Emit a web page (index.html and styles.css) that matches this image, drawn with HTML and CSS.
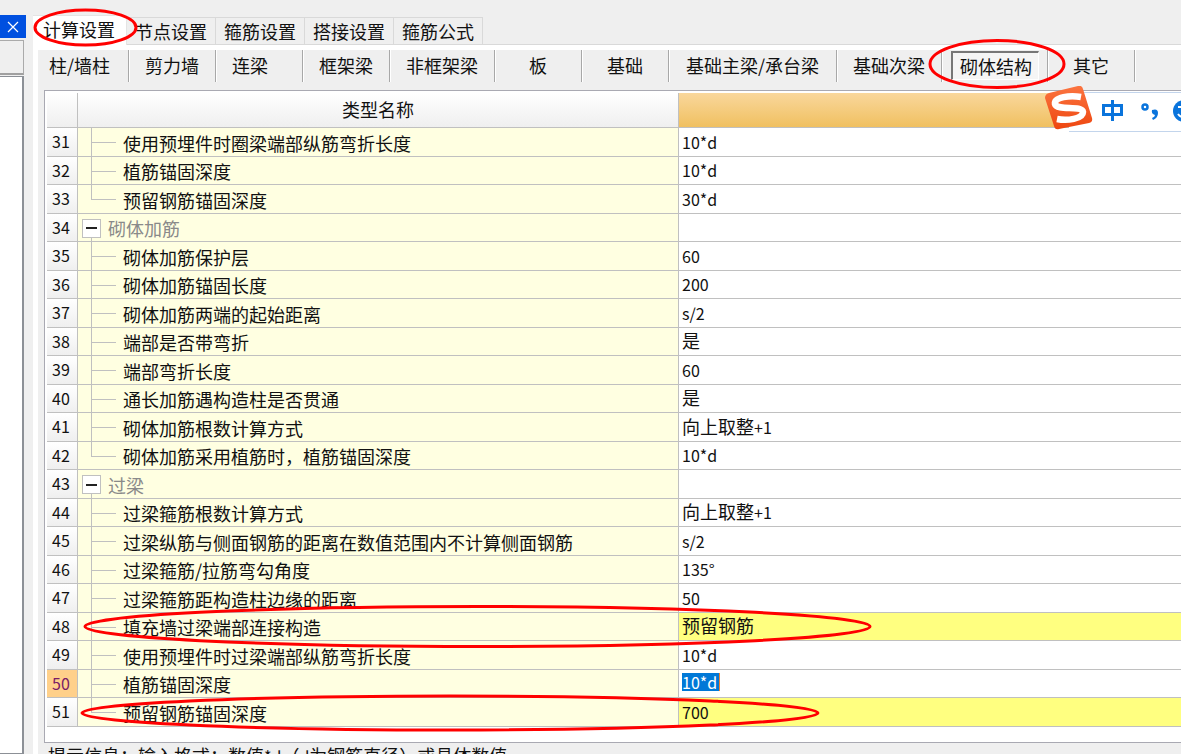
FILE: index.html
```html
<!DOCTYPE html>
<html lang="zh-CN">
<head>
<meta charset="utf-8">
<title>计算设置</title>
<link rel="stylesheet" href="styles.css">
</head>
<body>
<div class="app">
  <aside class="dock">
    <button class="dock-close" type="button" aria-label="关闭">
      <svg width="12" height="12" viewBox="0 0 12 12"><path d="M1 1L11 11M11 1L1 11" stroke="#fff" stroke-width="1.2" fill="none"/></svg>
    </button>
    <div class="dock-head"></div>
    <div class="dock-body"></div>
  </aside>
  <main class="panel">
    <nav class="tabs">
      <button type="button" class="tab active">计算设置</button>
      <button type="button" class="tab">节点设置</button>
      <button type="button" class="tab">箍筋设置</button>
      <button type="button" class="tab">搭接设置</button>
      <button type="button" class="tab">箍筋公式</button>
    </nav>
    <section class="page">
      <nav class="kinds">
        <button type="button" class="kind first">柱/墙柱</button>
        <button type="button" class="kind">剪力墙</button>
        <button type="button" class="kind start">连梁</button>
        <button type="button" class="kind">框架梁</button>
        <button type="button" class="kind">非框架梁</button>
        <button type="button" class="kind">板</button>
        <button type="button" class="kind">基础</button>
        <button type="button" class="kind wide">基础主梁/承台梁</button>
        <button type="button" class="kind">基础次梁</button>
        <button type="button" class="kind pressed"><span class="inset">砌体结构</span></button>
        <button type="button" class="kind">其它</button>
      </nav>
      <div class="frame">
        <table class="grid">
          <colgroup><col class="c-num"><col class="c-name"><col></colgroup>
          <thead><tr><th></th><th>类型名称</th><th class="hot"></th></tr></thead>
          <tbody>
            <tr><th>31</th><td class="leaf">使用预埋件时圈梁端部纵筋弯折长度</td><td><span class="n">10*d</span></td></tr>
            <tr><th>32</th><td class="leaf">植筋锚固深度</td><td><span class="n">10*d</span></td></tr>
            <tr><th>33</th><td class="leaf last">预留钢筋锚固深度</td><td><span class="n">30*d</span></td></tr>
            <tr><th>34</th><td class="group"><div class="group-row"><button type="button" class="fold" aria-label="折叠"></button>砌体加筋</div></td><td></td></tr>
            <tr><th>35</th><td class="leaf">砌体加筋保护层</td><td><span class="n">60</span></td></tr>
            <tr><th>36</th><td class="leaf">砌体加筋锚固长度</td><td><span class="n">200</span></td></tr>
            <tr><th>37</th><td class="leaf">砌体加筋两端的起始距离</td><td><span class="n">s/2</span></td></tr>
            <tr><th>38</th><td class="leaf">端部是否带弯折</td><td>是</td></tr>
            <tr><th>39</th><td class="leaf">端部弯折长度</td><td><span class="n">60</span></td></tr>
            <tr><th>40</th><td class="leaf">通长加筋遇构造柱是否贯通</td><td>是</td></tr>
            <tr><th>41</th><td class="leaf">砌体加筋根数计算方式</td><td>向上取整<span class="n">+1</span></td></tr>
            <tr><th>42</th><td class="leaf last">砌体加筋采用植筋时，植筋锚固深度</td><td><span class="n">10*d</span></td></tr>
            <tr><th>43</th><td class="group"><div class="group-row"><button type="button" class="fold" aria-label="折叠"></button>过梁</div></td><td></td></tr>
            <tr><th>44</th><td class="leaf">过梁箍筋根数计算方式</td><td>向上取整<span class="n">+1</span></td></tr>
            <tr><th>45</th><td class="leaf">过梁纵筋与侧面钢筋的距离在数值范围内不计算侧面钢筋</td><td><span class="n">s/2</span></td></tr>
            <tr><th>46</th><td class="leaf">过梁箍筋/拉筋弯勾角度</td><td><span class="n">135°</span></td></tr>
            <tr><th>47</th><td class="leaf">过梁箍筋距构造柱边缘的距离</td><td><span class="n">50</span></td></tr>
            <tr class="changed"><th>48</th><td class="leaf">填充墙过梁端部连接构造</td><td>预留钢筋</td></tr>
            <tr><th>49</th><td class="leaf">使用预埋件时过梁端部纵筋弯折长度</td><td><span class="n">10*d</span></td></tr>
            <tr class="current"><th>50</th><td class="leaf">植筋锚固深度</td><td><input class="editor" type="text" value="10*d" aria-label="植筋锚固深度"></td></tr>
            <tr class="changed"><th>51</th><td class="leaf last">预留钢筋锚固深度</td><td><span class="n">700</span></td></tr>
          </tbody>
        </table>
      </div>
      <p class="hint">提示信息：输入格式：数值<span class="n">*d</span>（<span class="n">d</span>为钢筋直径）或具体数值</p>
    </section>
  </main>

  <div class="ime">
    <svg class="ime-logo" width="48" height="46" viewBox="0 0 48 46">
      <defs><linearGradient id="flame" x1="0" y1="0" x2="0" y2="1"><stop offset="0" stop-color="#fb7440"/><stop offset="1" stop-color="#ee4710"/></linearGradient></defs>
      <path d="M4 7L33 0Q37 -1 38 3L47 32Q48 36 44 37L14 43Q10 44 9 40L0 12Q0 8 4 7Z" fill="url(#flame)"/>
      <path d="M36 11C25 9 9 11 10 18C12 25 37 19 38 26C38 33 22 35 12 33" stroke="#fff" stroke-width="6.5" fill="none"/>
    </svg>
    <svg class="ime-marks" width="90" height="36" viewBox="0 0 90 36">
      <g fill="none" stroke="#0a74dc" stroke-width="3">
        <rect x="4.500" y="11.500" width="18" height="9"/><path d="M13.500 6V27"/>
        <circle cx="46" cy="13" r="2.500" stroke-width="2.500"/>
      </g>
      <path d="M53 16Q59 14 59 19Q59 24 54 26L53 24Q56 23 56 21Q52 20 53 16Z" fill="#0a74dc"/>
      <circle cx="85" cy="17" r="11" fill="#0a74dc"/>
      <path d="M79 13h5M79 20q2 3 5 3" stroke="#fff" stroke-width="2" fill="none"/>
    </svg>
  </div>

  <svg class="marks" width="1181" height="754" viewBox="0 0 1181 754" fill="none" stroke="#f00" stroke-width="3">
    <ellipse cx="85.500" cy="27.500" rx="50.500" ry="17.500"/>
    <ellipse cx="997" cy="64" rx="67" ry="23.500"/>
    <ellipse cx="477.500" cy="626.500" rx="392.500" ry="20"/>
    <ellipse cx="450" cy="713" rx="368" ry="17"/>
  </svg>
</div>
</body>
</html>
```

FILE: styles.css
```css
* { box-sizing: border-box; }

body {
  margin: 0;
  background: #efefef;
  color: #111;
  font: 18px/24px "Noto Sans CJK SC", sans-serif;
}

button, input { font: inherit; color: inherit; border: 0; margin: 0; padding: 0; background: none; border-radius: 0; }

.n { font-size: 16px; line-height: 16px; }

.app {
  position: relative;
  display: flex;
  height: 100vh;
  overflow: hidden;
}

/* docked pane on the left */
.dock { flex: none; width: 33px; padding-top: 15px; display: flex; flex-direction: column; }
.dock-close { width: 26px; height: 23px; background: #0050e0; display: flex; align-items: center; justify-content: center; }
.dock-head { width: 24px; height: 35px; margin-top: 2px; border: 1px solid #aaa; border-left: 0; border-bottom: 2px solid #a0a0a0; }
.dock-body { flex: 1; width: 24px; margin-top: 1px; background: #fff; border: 1px solid #8c9096; border-left: 0; border-right: 2px solid #8c9096; }

.panel { flex: 1; min-width: 0; padding-top: 15px; display: flex; flex-direction: column; }

.tabs { flex: none; display: flex; align-items: flex-end; height: 30px; border-bottom: 1px solid #d9d9d9; }
.tab { height: 27px; padding: 0 8px; border: 1px solid #d9d9d9; border-left: 0; border-bottom: 0; white-space: nowrap; }
.tab.active { height: 30px; margin-bottom: -1px; padding: 0 11px 4px 10px; background: #fff; border-color: #e4e4e4; }

.page { flex: 1; border-left: 5px solid #fff; border-top: 5px solid #fff; }

.kinds { display: flex; height: 32px; }
.kind { position: relative; min-width: 87px; padding: 0 16px 2px; border-right: 1px solid #a8a8a8; box-shadow: 1px 0 #fff; white-space: nowrap; }
.kind.first { min-width: 91px; padding-left: 11px; text-align: left; }
.kind.start { text-align: left; }
.kind.wide { min-width: 168px; }
.kind.pressed { padding: 0 8px 2px 9px; }
.inset { display: block; height: 29px; padding: 0 6px 0 7px; line-height: 26px; background: #f5f5f5; border: 1px solid #fff; border-top: 2px solid #777; border-left: 2px solid #777; }

.frame { margin: 8px 0 0 6px; padding: 2px 0 15px 2px; background: #fff; border: 1px solid #a9a9b2; border-right: 0; }

.grid { width: 100%; table-layout: fixed; border-spacing: 0; border-collapse: separate; }
.c-num { width: 31px; }
.c-name { width: 601px; }
.grid th, .grid td { height: 28px; padding: 0 0 2px; font-weight: 400; text-align: left; white-space: nowrap; line-height: 20px; vertical-align: middle; border-right: 1px solid #c0c0c0; border-bottom: 1px solid #c0c0c0; }
.grid tr > :last-child { border-right: 0; }
.grid tbody tr:nth-child(odd) > * { height: 29px; }
.grid thead th { height: 35px; text-align: center; background: linear-gradient(#fff, #efefef); }
.grid thead .hot { background: linear-gradient(#f9d79c, #f0c060); }
.grid tbody th { padding-left: 5px; font-size: 16px; background: linear-gradient(#fff, #efefef); }
.grid td:last-child { padding: 0 0 3px 3px; }
.grid td.leaf, .grid td.group { background-color: #ffffe1; background-repeat: no-repeat; background-image: linear-gradient(#c0c0c0, #c0c0c0), linear-gradient(#c0c0c0, #c0c0c0); }
.grid td.leaf { padding: 1px 0 0 45px; background-size: 1px 100%, 25px 1px; background-position: 13px 0, 13px 14px; }
.grid td.last { background-size: 1px 14px, 25px 1px; }
.grid td.group { padding: 1px 0 0 4px; color: #8a8a8a; background-size: 1px 6px, 0 0; background-position: 13px 100%, 0 0; }

.group-row { display: flex; align-items: center; gap: 7px; }
.fold { width: 19px; height: 19px; border: 1px solid #c0c0c0; background: linear-gradient(#222, #222) center / 11px 2px no-repeat #fff; }

.grid tr.changed td:last-child { background: #ffff80; }
.grid tr.current th { background: #ffd08a; color: #7a1b66; }

.editor { display: block; width: 38px; height: 18px; font-size: 16px; line-height: 18px; color: #fff; background: #0078d7; border-right: 1px solid #f08030; outline: 0; }

.hint { margin: 0 0 0 10px; white-space: nowrap; }

/* floating input-method bar */
.ime { position: absolute; top: 86px; left: 1045px; right: 0; height: 46px; overflow: hidden; display: flex; align-items: flex-start; }
.ime::before { content: ""; position: absolute; top: 6px; left: 24px; right: 0; height: 38px; background: #fff; border: 1px solid #c3d5ec; border-width: 1px 0; }
.ime-logo { position: relative; flex: none; }
.ime-marks { position: relative; flex: none; margin: 8px 0 0 6px; }

.marks { position: absolute; top: 0; left: 0; pointer-events: none; }
```
